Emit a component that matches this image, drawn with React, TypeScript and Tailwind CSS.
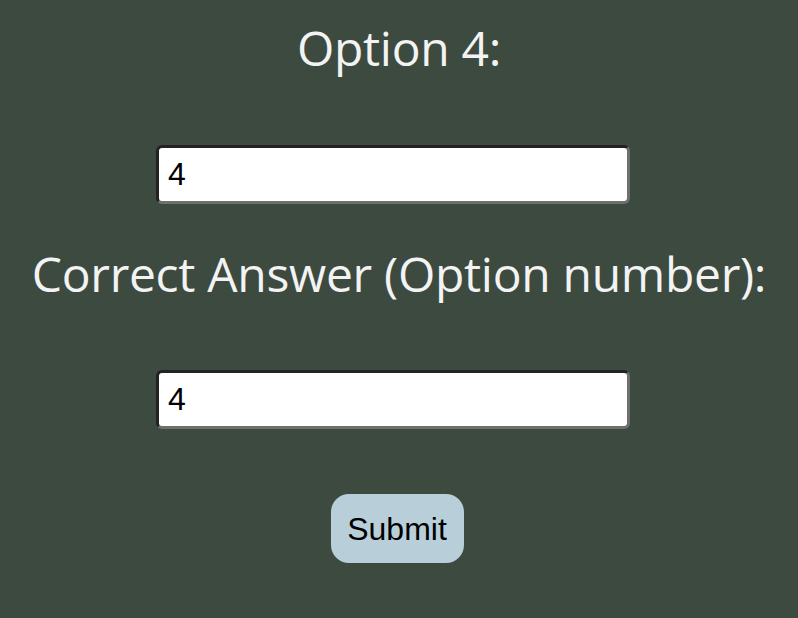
export default function App() {
  return (
    <div className="min-h-[618px] w-full bg-[#3c4a40] flex flex-col items-center pt-[16px] font-['Open_Sans',sans-serif]">
      <label className="text-[48px] leading-[64px] text-[#f3f3f3] tracking-[-0.3px]">Option 4:</label>
      <input
        defaultValue="4"
        className="mt-[65px] mr-[12px] w-[474px] h-[59px] bg-white rounded-[6px] border-[3px] border-t-[#222] border-l-[#222] border-b-[#6f6f6f] border-r-[#6f6f6f] px-[9px] text-[32px] text-black font-['Liberation_Sans',sans-serif]"
      />
      <label className="mt-[38px] text-[48px] leading-[64px] text-[#f3f3f3] tracking-[-0.3px]">Correct Answer (Option number):</label>
      <input
        defaultValue="4"
        className="mt-[64px] mr-[12px] w-[474px] h-[59px] bg-white rounded-[6px] border-[3px] border-t-[#222] border-l-[#222] border-b-[#6f6f6f] border-r-[#6f6f6f] px-[9px] text-[32px] text-black font-['Liberation_Sans',sans-serif]"
      />
      <button className="mt-[65px] mr-[4px] w-[133px] h-[69px] rounded-[18px] bg-[#b8cfd9] text-[32px] text-black font-['Liberation_Sans',sans-serif]">
        Submit
      </button>
    </div>
  )
}
